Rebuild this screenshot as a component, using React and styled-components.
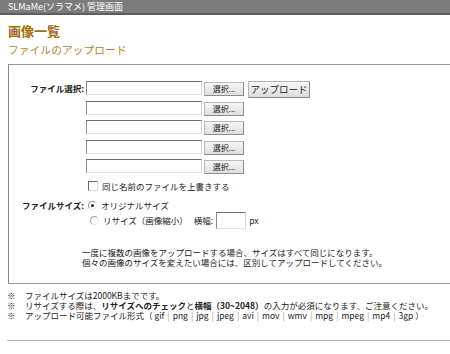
import React from "react";
import styled, { createGlobalStyle } from "styled-components";

const Global = createGlobalStyle`
  html, body { margin: 0; padding: 0; background: #fff; overflow: hidden; }
  body {
    font-family: "Noto Sans CJK JP", "Liberation Sans", sans-serif;
    color: #222;
    width: 450px;
    height: 354px;
  }
`;

const TopBar = styled.div`
  height: 13px;
  background: #7c7c7c;
  border-bottom: 2px solid #5e5e5e;
  color: #fff;
  font-size: 9px;
  line-height: 13px;
  padding-left: 8px;
  white-space: nowrap;
`;

const Page = styled.div`
  padding-left: 8px;
  width: 480px;
`;

const Title = styled.h1`
  margin: 8px 0 0;
  font-size: 13px;
  line-height: 16px;
  font-weight: bold;
  color: #a26a12;
`;

const SubTitle = styled.h2`
  margin: 4px 0 0;
  font-size: 10.7px;
  line-height: 14px;
  font-weight: normal;
  color: #b3832c;
  letter-spacing: 0.1px;
`;

const Box = styled.div`
  margin-top: 7px;
  border-top: 1px solid #9a9a9a;
  border-left: 1px solid #8a8a8a;
  border-bottom: 1px solid #9a9a9a;
  padding: 16px 0 16px;
  font-size: 8.5px;
`;

const FormGrid = styled.div`
  display: grid;
  grid-template-columns: 75px 1fr;
  column-gap: 2px;
  align-items: start;
`;

const Label = styled.div`
  font-weight: bold;
  text-align: right;
  line-height: 13px;
  white-space: nowrap;
  margin-top: ${(p) => p.$top || 0}px;
`;

const FileArea = styled.div`
  display: flex;
  align-items: flex-start;
`;

const FileList = styled.div`
  display: flex;
  flex-direction: column;
  gap: 5.5px;
`;

const FileRow = styled.div`
  display: flex;
  align-items: flex-start;
  height: 14px;
  gap: 2px;
`;

const TextBox = styled.div`
  box-sizing: border-box;
  width: ${(p) => p.$w}px;
  height: ${(p) => p.$h}px;
  background: #fff;
  border-top: 1px solid #6f6f6f;
  border-left: 1px solid #8c8c8c;
  border-right: 1px solid #d4d4d4;
  border-bottom: 1px solid #e2e2e2;
`;

const SmallButton = styled.div`
  box-sizing: border-box;
  width: 40px;
  height: 14px;
  margin-top: 1px;
  background: linear-gradient(#f6f6f6, #dedede);
  border: 1px solid #b9b9b9;
  border-right-color: #8e8e8e;
  border-bottom-color: #8e8e8e;
  font-size: 8px;
  line-height: 12px;
  text-align: center;
  color: #222;
  white-space: nowrap;
`;

const UploadButton = styled.div`
  box-sizing: border-box;
  width: 62px;
  height: 17px;
  margin-left: 4px;
  background: linear-gradient(#f7f7f7, #dcdcdc);
  border: 1px solid #b5b5b5;
  border-right-color: #888;
  border-bottom-color: #888;
  font-size: 9.5px;
  line-height: 15px;
  text-align: center;
  color: #222;
  white-space: nowrap;
`;

const OptionRow = styled.div`
  display: flex;
  align-items: center;
  height: ${(p) => p.$h}px;
  margin-top: ${(p) => p.$top || 0}px;
  margin-left: ${(p) => p.$left || 0}px;
  white-space: nowrap;
  line-height: 12px;
`;

const CheckBox = styled.span`
  box-sizing: border-box;
  width: 10px;
  height: 10px;
  margin-left: 2px;
  margin-right: 4px;
  background: #fff;
  border-top: 1px solid #6a6a6a;
  border-left: 1px solid #6a6a6a;
  border-right: 1px solid #d8d8d8;
  border-bottom: 1px solid #d8d8d8;
`;

const Radio = styled.span`
  position: relative;
  box-sizing: border-box;
  width: 9px;
  height: 9px;
  margin-right: 4px;
  border-radius: 50%;
  border: 1px solid #9a9a9a;
  border-right-color: #e4e4e4;
  border-bottom-color: #e4e4e4;
  background: #fff;
  &::after {
    content: "";
    position: absolute;
    left: 2px;
    top: 2px;
    width: 3px;
    height: 3px;
    border-radius: 50%;
    background: ${(p) => (p.$checked ? "#222" : "transparent")};
  }
`;

const Gap = styled.span`
  display: inline-block;
  width: ${(p) => p.$w}px;
`;

const BoxNote = styled.div`
  margin-top: 18.5px;
  padding-left: 73px;
  line-height: 10px;
  color: #222;
  white-space: nowrap;
`;

const Notes = styled.div`
  margin-top: 6px;
  font-size: 8.5px;
  line-height: 10px;
  white-space: nowrap;
`;

const NoteLine = styled.div`
  display: flex;
`;

const Mark = styled.span`
  width: 18px;
  flex: none;
  margin-left: -1px;
`;

const Sep = styled.span`
  color: #999;
  padding: 0 3px;
`;

const Rule = styled.div`
  margin-top: 20px;
  margin-left: -1px;
  border-top: 1px solid #b8b8b8;
  width: 460px;
`;

const formats = ["gif", "png", "jpg", "jpeg", "avi", "mov", "wmv", "mpg", "mpeg", "mp4", "3gp"];

export default function App() {
  return (
    <>
      <Global />
      <TopBar>SLMaMe(ソラマメ) 管理画面</TopBar>
      <Page>
        <Title>画像一覧</Title>
        <SubTitle>ファイルのアップロード</SubTitle>
        <Box>
          <FormGrid>
            <Label $top={1}>ファイル選択:</Label>
            <div>
              <FileArea>
                <FileList>
                  {[0, 1, 2, 3, 4].map((i) => (
                    <FileRow key={i}>
                      <TextBox $w={116} $h={14} />
                      <SmallButton>選択...</SmallButton>
                    </FileRow>
                  ))}
                </FileList>
                <UploadButton>アップロード</UploadButton>
              </FileArea>
              <OptionRow $h={12} $top={7}>
                <CheckBox />
                同じ名前のファイルを上書きする
              </OptionRow>
            </div>
            <Label $top={6.5}>ファイルサイズ:</Label>
            <div>
              <OptionRow $h={13} $top={6.5} $left={2}>
                <Radio $checked />
                オリジナルサイズ
              </OptionRow>
              <OptionRow $h={17} $left={4}>
                <Radio />
                リサイズ（画像縮小）
                <Gap $w={6} />
                横幅:
                <Gap $w={3} />
                <TextBox $w={30} $h={17} />
                <Gap $w={3} />
                px
              </OptionRow>
            </div>
          </FormGrid>
          <BoxNote>
            <div>一度に複数の画像をアップロードする場合、サイズはすべて同じになります。</div>
            <div>個々の画像のサイズを変えたい場合には、区別してアップロードしてください。</div>
          </BoxNote>
        </Box>
        <Notes>
          <NoteLine>
            <Mark>※</Mark>
            <span>ファイルサイズは2000KBまでです。</span>
          </NoteLine>
          <NoteLine>
            <Mark>※</Mark>
            <span>
              リサイズする際は、<b>リサイズへのチェック</b>と<b>横幅（30~2048）</b>の入力が必須になります、ご注意ください。
            </span>
          </NoteLine>
          <NoteLine>
            <Mark>※</Mark>
            <span>
              アップロード可能ファイル形式（
              {formats.map((f, i) => (
                <React.Fragment key={f}>
                  {i > 0 && <Sep>|</Sep>}
                  {i === 0 && " "}
                  {f}
                </React.Fragment>
              ))}
              {" "}）
            </span>
          </NoteLine>
        </Notes>
        <Rule />
      </Page>
    </>
  );
}
